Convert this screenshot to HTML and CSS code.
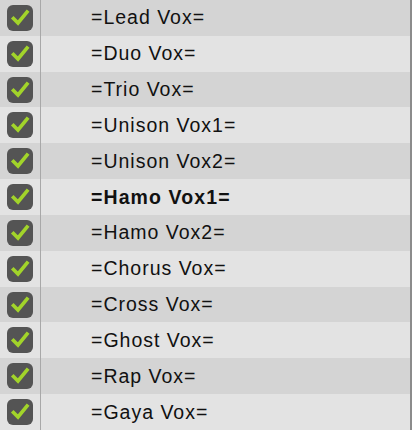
FILE: index.html
```html
<!DOCTYPE html>
<html lang="en">
<head>
  <meta charset="UTF-8">
  <title>Tracks</title>
  <link rel="stylesheet" href="styles.css">
</head>
<body>
  <div class="track-list">
    <div class="track-row"><span class="check"><svg viewBox="0 0 26 26"><path d="M6.5 13.5 L11 18 L20 7"/></svg></span><span class="name">=Lead Vox=</span></div>
    <div class="track-row"><span class="check"><svg viewBox="0 0 26 26"><path d="M6.5 13.5 L11 18 L20 7"/></svg></span><span class="name">=Duo Vox=</span></div>
    <div class="track-row"><span class="check"><svg viewBox="0 0 26 26"><path d="M6.5 13.5 L11 18 L20 7"/></svg></span><span class="name">=Trio Vox=</span></div>
    <div class="track-row"><span class="check"><svg viewBox="0 0 26 26"><path d="M6.5 13.5 L11 18 L20 7"/></svg></span><span class="name">=Unison Vox1=</span></div>
    <div class="track-row"><span class="check"><svg viewBox="0 0 26 26"><path d="M6.5 13.5 L11 18 L20 7"/></svg></span><span class="name">=Unison Vox2=</span></div>
    <div class="track-row"><span class="check"><svg viewBox="0 0 26 26"><path d="M6.5 13.5 L11 18 L20 7"/></svg></span><span class="name bold">=Hamo Vox1=</span></div>
    <div class="track-row"><span class="check"><svg viewBox="0 0 26 26"><path d="M6.5 13.5 L11 18 L20 7"/></svg></span><span class="name">=Hamo Vox2=</span></div>
    <div class="track-row"><span class="check"><svg viewBox="0 0 26 26"><path d="M6.5 13.5 L11 18 L20 7"/></svg></span><span class="name">=Chorus Vox=</span></div>
    <div class="track-row"><span class="check"><svg viewBox="0 0 26 26"><path d="M6.5 13.5 L11 18 L20 7"/></svg></span><span class="name">=Cross Vox=</span></div>
    <div class="track-row"><span class="check"><svg viewBox="0 0 26 26"><path d="M6.5 13.5 L11 18 L20 7"/></svg></span><span class="name">=Ghost Vox=</span></div>
    <div class="track-row"><span class="check"><svg viewBox="0 0 26 26"><path d="M6.5 13.5 L11 18 L20 7"/></svg></span><span class="name">=Rap Vox=</span></div>
    <div class="track-row"><span class="check"><svg viewBox="0 0 26 26"><path d="M6.5 13.5 L11 18 L20 7"/></svg></span><span class="name">=Gaya Vox=</span></div>
  </div>
</body>
</html>
```

FILE: styles.css
```css
body {
  margin: 0;
  font-family: 'Liberation Sans', Arial, sans-serif;
  background: #d4d4d4;
}

.track-list {
  width: 412px;
  height: 430px;
  overflow: hidden;
  border-right: 2px solid #8c8c8c;
  box-sizing: border-box;
}

.track-row {
  display: flex;
  align-items: center;
  height: 35.8333px;
  background: #d4d4d4;
}

.track-row:nth-child(even) {
  background: #e3e3e3;
}

.check {
  width: 41px;
  height: 100%;
  flex: none;
  display: flex;
  align-items: center;
  justify-content: center;
  border-right: 1px solid #a8a8a8;
  box-sizing: border-box;
}

.check svg {
  width: 26px;
  height: 26px;
  background: #545454;
  border-radius: 6px;
}

.check path {
  fill: none;
  stroke: #a2d42a;
  stroke-width: 3.6;
  stroke-linecap: square;
}

.name {
  margin-left: 50px;
  font-size: 19.5px;
  letter-spacing: 1px;
  color: #111;
}

.name.bold {
  font-weight: bold;
  letter-spacing: 1.1px;
}
```
